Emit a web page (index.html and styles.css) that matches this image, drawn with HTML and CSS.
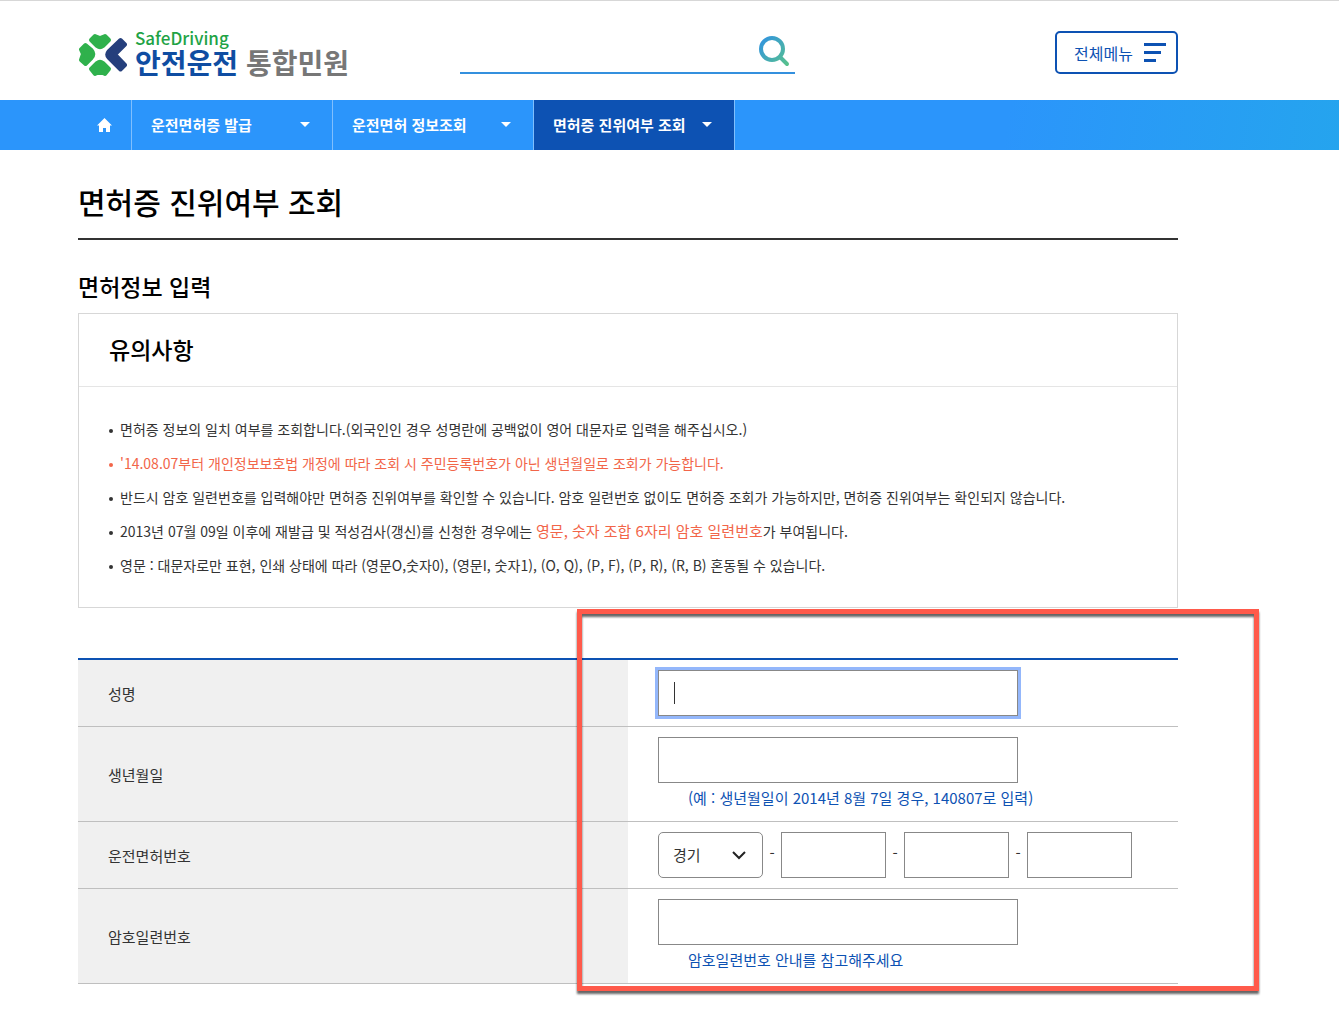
FILE: index.html
```html
<!DOCTYPE html>
<html lang="ko">
<head>
    <meta charset="UTF-8">
    <meta name="viewport" content="width=device-width, initial-scale=1.0">
    <title>면허증 진위여부 조회</title>
    <link rel="stylesheet" href="styles.css">
</head>
<body>

<header class="header">
    <div class="inner header-inner">
        <a href="#" class="logo">
            <svg class="logo-mark" width="48" height="44" viewBox="0 0 48 44" aria-hidden="true">
                <g fill="#2fb14c" stroke="#2fb14c" stroke-width="4" stroke-linejoin="round">
                    <path d="M12 7L16 3l5 2 5-2 4 4-6 6q-3 2.500-6 0z"/>
                    <path d="M6.500 12L2 16.500l2 4.500-2 6L6.500 31l6-6q3.500-4 0-8z"/>
                    <path d="M12 36l4 5 5-2 5 2 4-5-6-6q-3-2.500-6 0z"/>
                </g>
                <path d="M41.500 7L46 11.500 36 21.500l10 10.500-4.500 4.500-12-12q-2.500-3 0-6z" fill="#253f7c" stroke="#253f7c" stroke-width="4" stroke-linejoin="round"/>
            </svg>
            <span class="logo-text">
                <span class="logo-en">SafeDriving</span>
                <span class="logo-ko"><strong>안전운전</strong> <em>통합민원</em></span>
            </span>
        </a>

        <form class="search" role="search">
            <input type="text" class="search-input" aria-label="검색어">
            <button type="submit" class="search-btn" aria-label="검색">
                <svg width="32" height="32" viewBox="0 0 32 32" fill="none" stroke="url(#searchColor)" stroke-width="4" aria-hidden="true">
                    <defs>
                        <linearGradient id="searchColor" gradientUnits="userSpaceOnUse" x1="4" y1="6" x2="30" y2="30">
                            <stop offset="0" stop-color="#3598d8"/>
                            <stop offset="1" stop-color="#59c38a"/>
                        </linearGradient>
                    </defs>
                    <circle cx="14" cy="13" r="11"/>
                    <path d="M22 21l7 7" stroke-linecap="round"/>
                </svg>
            </button>
        </form>

        <button type="button" class="menu-btn">
            전체메뉴
            <svg width="22" height="19" viewBox="0 0 22 19" fill="currentColor" aria-hidden="true">
                <path d="M0 0h22v3H0zM0 8h17v3H0zM0 16h12v3H0z"/>
            </svg>
        </button>
    </div>
</header>

<nav class="nav">
    <ul class="inner nav-list">
        <li class="nav-home">
            <a href="#" aria-label="홈">
                <svg width="15" height="14" viewBox="0 0 15 14" fill="#fff" aria-hidden="true">
                    <path d="M7.500 0L15 7.500h-2V14H9v-4H6v4H2V7.500H0z"/>
                </svg>
            </a>
        </li>
        <li class="nav-item"><a href="#">운전면허증 발급</a></li>
        <li class="nav-item"><a href="#">운전면허 정보조회</a></li>
        <li class="nav-item active"><a href="#">면허증 진위여부 조회</a></li>
    </ul>
</nav>

<main class="inner">
    <h1>면허증 진위여부 조회</h1>
    <h2>면허정보 입력</h2>

    <section class="notice">
        <h3>유의사항</h3>
        <ul>
            <li>면허증 정보의 일치 여부를 조회합니다.(외국인인 경우 성명란에 공백없이 영어 대문자로 입력을 해주십시오.)</li>
            <li class="red">'14.08.07부터 개인정보보호법 개정에 따라 조회 시 주민등록번호가 아닌 생년월일로 조회가 가능합니다.</li>
            <li>반드시 암호 일련번호를 입력해야만 면허증 진위여부를 확인할 수 있습니다. 암호 일련번호 없이도 면허증 조회가 가능하지만, 면허증 진위여부는 확인되지 않습니다.</li>
            <li>2013년 07월 09일 이후에 재발급 및 적성검사(갱신)를 신청한 경우에는 <span class="point">영문, 숫자 조합 6자리 암호 일련번호</span>가 부여됩니다.</li>
            <li>영문 : 대문자로만 표현, 인쇄 상태에 따라 (영문O,숫자0), (영문I, 숫자1), (O, Q), (P, F), (P, R), (R, B) 혼동될 수 있습니다.</li>
        </ul>
    </section>

    <form class="license-form">
        <table>
            <tr>
                <th scope="row"><label for="name">성명</label></th>
                <td><input type="text" id="name" class="text-input focused"></td>
            </tr>
            <tr>
                <th scope="row"><label for="birth">생년월일</label></th>
                <td>
                    <input type="text" id="birth" class="text-input">
                    <p class="help">(예 : 생년월일이 2014년 8월 7일 경우, 140807로 입력)</p>
                </td>
            </tr>
            <tr>
                <th scope="row"><label for="area">운전면허번호</label></th>
                <td>
                    <div class="license-no">
                        <select id="area">
                            <option>경기</option>
                            <option>서울</option>
                            <option>부산</option>
                        </select>
                        <span>-</span>
                        <input type="text" class="text-input" aria-label="운전면허번호 둘째 자리">
                        <span>-</span>
                        <input type="text" class="text-input" aria-label="운전면허번호 셋째 자리">
                        <span>-</span>
                        <input type="text" class="text-input" aria-label="운전면허번호 넷째 자리">
                    </div>
                </td>
            </tr>
            <tr>
                <th scope="row"><label for="serial">암호일련번호</label></th>
                <td>
                    <input type="text" id="serial" class="text-input">
                    <p class="help">암호일련번호 안내를 참고해주세요</p>
                </td>
            </tr>
        </table>
        <div class="highlight"></div>
    </form>
</main>

</body>
</html>
```
FILE: styles.css
```css
* {
    box-sizing: border-box;
}

body {
    margin: 0;
    font-family: "Noto Sans CJK KR", sans-serif;
    font-size: 15px;
    color: #333;
    background-color: #fff;
}

h1, h2, h3, ul, p {
    margin: 0;
    padding: 0;
}

ul {
    list-style: none;
}

a {
    color: inherit;
    text-decoration: none;
}

input, select, button {
    font: inherit;
    color: inherit;
}

.inner {
    max-width: 1100px;
    margin: 0 78px;
}

main {
    padding-bottom: 30px;
}

/* header */
.header {
    border-top: 1px solid #d7d7d7;
}

.header-inner {
    display: grid;
    grid-template-columns: 382px 335px 1fr;
    height: 99px;
    padding-top: 30px;
    align-items: start;
}

.logo {
    display: flex;
    gap: 8px;
    padding-left: 1px;
}

.logo-mark {
    margin-top: 2px;
}

.logo-text {
    display: flex;
    flex-direction: column;
}

.logo-en {
    font-size: 17px;
    line-height: 14px;
    font-weight: 500;
    color: #1fa346;
}

.logo-ko {
    font-size: 28px;
    line-height: 34px;
    color: #0f4da2;
}

.logo-ko em {
    font-style: normal;
    font-weight: 700;
    color: #777;
}

.search {
    display: flex;
    height: 43px;
    border-bottom: 2px solid #3490de;
}

.search-input {
    flex: 1;
    min-width: 0;
    border: 0;
    outline: none;
    background: none;
}

.search-btn {
    padding: 0 5px 0 0;
    border: 0;
    background: none;
    cursor: pointer;
}

.search-btn svg {
    display: block;
}

.menu-btn {
    display: flex;
    justify-self: end;
    align-items: center;
    gap: 11px;
    height: 43px;
    padding: 0 10px 0 17px;
    border: 2px solid #0d52b3;
    border-radius: 5px;
    background-color: #fff;
    color: #0d52b3;
    font-size: 16px;
    cursor: pointer;
}

/* navigation */
.nav {
    background: linear-gradient(100deg, #2b95fb 75%, #25a4ee 100%);
}

.nav-list {
    display: flex;
    height: 50px;
    color: #fff;
    font-weight: 700;
}

.nav-list li {
    border-right: 1px solid #80bffd;
}

.nav-list a {
    display: flex;
    align-items: center;
    height: 100%;
}

.nav-home {
    width: 54px;
}

.nav-home a {
    justify-content: center;
}

.nav-item {
    width: 201px;
}

.nav-item a {
    justify-content: space-between;
    padding: 0 22px 2px 19px;
}

.nav-item a::after {
    content: "";
    border: 5px solid transparent;
    border-top-color: #fff;
    border-bottom: 0;
}

.nav-item.active {
    background-color: #0d52b3;
}

/* content */
h1, h2, h3 {
    font-weight: 500;
    color: #000;
}

h1 {
    height: 90px;
    padding-top: 30px;
    border-bottom: 2px solid #333;
    font-size: 30px;
    line-height: 42px;
}

h2 {
    padding: 29px 0 10px;
    font-size: 23px;
    line-height: 34px;
}

.notice {
    border: 1px solid #d7d7d7;
}

.notice h3 {
    padding: 18px 30px 20px;
    border-bottom: 1px solid #e5e5e5;
    font-size: 23px;
    line-height: 34px;
}

.notice ul {
    padding: 25px 30px;
}

.notice li {
    height: 34px;
    font-size: 14px;
    line-height: 34px;
}

.notice li::before {
    content: "";
    display: inline-block;
    width: 4px;
    height: 4px;
    margin-right: 7px;
    border-radius: 50%;
    background-color: currentColor;
    vertical-align: 2px;
}

.notice .red,
.notice .point {
    color: #f26549;
}

.notice .point {
    font-size: 15px;
}

/* form */
.license-form {
    position: relative;
    margin-top: 50px;
}

table {
    width: 100%;
    border-top: 2px solid #0d52b3;
    border-spacing: 0;
}

th, td {
    padding: 10px 30px;
    border-bottom: 1px solid #bfbfbf;
    text-align: left;
}

th {
    width: 50%;
    background-color: #f0f0f0;
    font-weight: 400;
}

.text-input {
    display: block;
    width: 360px;
    height: 46px;
    padding: 0 15px;
    border: 1px solid #888;
    border-radius: 0;
    background-color: #fff;
}

.text-input.focused {
    background: linear-gradient(#333, #333) 15px 50% / 1px 22px no-repeat #fff;
    box-shadow: 0 0 0 3px #94b7fb;
    outline: none;
}

.help {
    padding: 1px 0 0 30px;
    line-height: 27px;
    color: #0d52b3;
}

.license-no {
    display: flex;
}

.license-no .text-input,
.license-no select {
    width: 105px;
    height: 46px;
}

.license-no span {
    width: 18px;
    line-height: 42px;
    text-align: center;
}

select {
    padding: 0 14px 2px;
    border: 1px solid #888;
    border-radius: 5px;
    appearance: none;
    background: url("data:image/svg+xml,%3Csvg xmlns='http://www.w3.org/2000/svg' width='14' height='9' fill='none' stroke='%23222' stroke-width='2'%3E%3Cpath d='M1 1l6 6 6-6'/%3E%3C/svg%3E") right 16px center no-repeat #fff;
}

/* red guide box over the input area */
.highlight {
    position: absolute;
    top: -49px;
    right: -81px;
    bottom: -7px;
    left: 499px;
    border: 5px solid #ff5a4b;
    filter: drop-shadow(0 3px 1px rgba(0, 0, 0, 0.6));
    pointer-events: none;
}
```
